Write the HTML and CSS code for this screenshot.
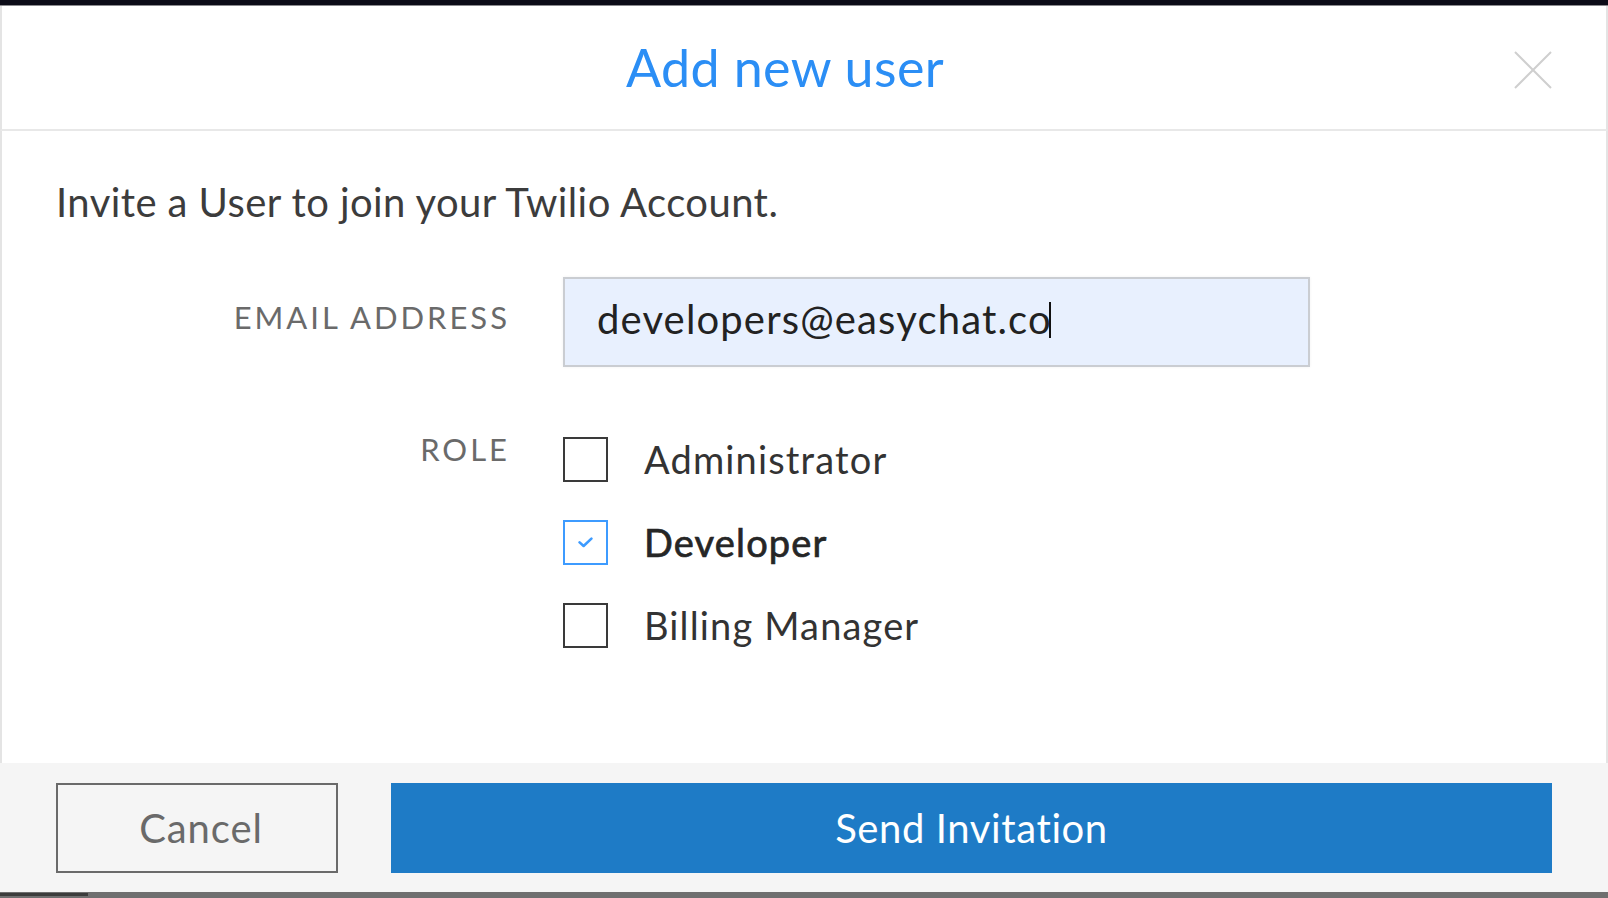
FILE: index.html
```html
<!DOCTYPE html>
<html lang="en">
<head>
<meta charset="utf-8">
<title>Add new user</title>
<link rel="stylesheet" href="styles.css">
</head>
<body>
<div class="page">
  <div class="topbar"></div>
  <header class="modal-header">
    <h1 class="modal-title">Add new user</h1>
    <button class="close-btn" type="button" aria-label="Close">
      <svg width="38" height="38" viewBox="0 0 38 38" aria-hidden="true">
        <path d="M1 1 L37 37 M37 1 L1 37" stroke="#cfcfcf" stroke-width="2" fill="none"/>
      </svg>
    </button>
  </header>
  <main class="modal-body">
    <p class="intro">Invite a User to join your Twilio Account.</p>
    <div class="form">
      <div class="label label-email">EMAIL ADDRESS</div>
      <div class="input" role="textbox">
        <span class="input-text">developers@easychat.co</span><span class="caret"></span>
      </div>
      <div class="label label-role">ROLE</div>
      <div class="options">
        <label class="option">
          <span class="box"></span>
          <span class="option-text">Administrator</span>
        </label>
        <label class="option checked">
          <span class="box">
            <svg width="15" height="11" viewBox="0 0 15 11" aria-hidden="true">
              <path d="M1.6 5.4 L5.6 9 L13.4 1.6" stroke="#3d9bff" stroke-width="2.6" fill="none" stroke-linecap="round" stroke-linejoin="round"/>
            </svg>
          </span>
          <span class="option-text">Developer</span>
        </label>
        <label class="option">
          <span class="box"></span>
          <span class="option-text">Billing Manager</span>
        </label>
      </div>
    </div>
  </main>
  <footer class="modal-footer">
    <button class="btn btn-cancel" type="button">Cancel</button>
    <button class="btn btn-primary" type="button">Send Invitation</button>
  </footer>
  <div class="bottombar"><span class="bottombar-mark"></span></div>
</div>
</body>
</html>
```

FILE: styles.css
```css
* {
  box-sizing: border-box;
}

html, body {
  margin: 0;
  padding: 0;
}

body {
  font-family: "Lato", "Open Sans", sans-serif;
  background: #ffffff;
  color: #3a3a3a;
}

.page {
  height: 100vh;
  display: flex;
  flex-direction: column;
}

.topbar {
  height: 6px;
  background: #0b0b17;
  border-bottom: 1px solid #8a8a8e;
  flex: none;
}

.modal-header {
  height: 125px;
  flex: none;
  display: flex;
  align-items: center;
  padding: 0 54px;
  border-left: 2px solid #e4e4e4;
  border-right: 2px solid #e4e4e4;
  border-bottom: 2px solid #e8e8e8;
}

.modal-title {
  flex: 1;
  margin: 0;
  text-align: center;
  font-size: 52px;
  font-weight: 400;
  line-height: 1.2;
  letter-spacing: 0.4px;
  color: #2b8ef5;
}

.close-btn {
  width: 38px;
  height: 38px;
  padding: 0;
  margin: 4px 0 0 0;
  border: 0;
  background: transparent;
  display: flex;
}

.modal-body {
  flex: 1;
  padding: 47px 54px 0;
  border-left: 2px solid #e4e4e4;
  border-right: 2px solid #e4e4e4;
}

.intro {
  margin: 0 0 51px;
  font-size: 40px;
  line-height: 1.2;
  letter-spacing: 0.42px;
  color: #3c3c3c;
}

.form {
  display: grid;
  grid-template-columns: 451px 747px;
  column-gap: 56px;
  row-gap: 70px;
}

.label {
  text-align: right;
  font-size: 31px;
  line-height: 24px;
  letter-spacing: 3px;
  color: #6a6a6a;
  margin-right: -3px;
}

.label-email {
  padding-top: 28px;
}

.input {
  height: 90px;
  border: 2px solid #cacdd2;
  background: #e8f0fe;
  padding: 0 32px;
  display: flex;
  align-items: center;
  font-size: 40px;
  letter-spacing: 1.15px;
  color: #222222;
  box-shadow: 0 0 3px rgba(0, 0, 0, 0.06);
}

.input-text {
  line-height: 1.2;
  padding-bottom: 6px;
}

.caret {
  display: inline-block;
  width: 2px;
  height: 36px;
  background: #111111;
  margin-left: -3px;
  margin-top: -4px;
}

.options {
  display: flex;
  flex-direction: column;
  gap: 38px;
}

.option {
  display: flex;
  align-items: center;
  gap: 36px;
  height: 45px;
}

.box {
  width: 45px;
  height: 45px;
  border: 2px solid #3a3a3a;
  display: flex;
  align-items: center;
  justify-content: center;
  flex: none;
}

.option.checked .box {
  border-color: #3d9bff;
}

.option-text {
  font-size: 38px;
  line-height: 1.2;
  letter-spacing: 1.15px;
  color: #333333;
}

.option.checked .option-text {
  color: #262626;
  -webkit-text-stroke: 0.7px #262626;
}

.modal-footer {
  height: 129px;
  flex: none;
  background: #f5f5f5;
  display: flex;
  gap: 53px;
  padding: 20px 56px 19px;
}

.btn {
  height: 90px;
  font-family: "Lato", "Open Sans", sans-serif;
  font-size: 40px;
  line-height: 1;
  letter-spacing: 0.6px;
  cursor: pointer;
}

.btn-cancel {
  width: 282px;
  padding: 0 0 0 8px;
  border: 2px solid #6a6a6a;
  background: transparent;
  color: #6a6a6a;
  letter-spacing: 0.9px;
}

.btn-primary {
  flex: 1;
  border: 0;
  background: #1e7bc6;
  color: #ffffff;
}

.bottombar {
  height: 6px;
  flex: none;
  background: #6f6f6f;
  display: flex;
}

.bottombar-mark {
  width: 88px;
  height: 3px;
  margin-top: 1px;
  background: #3c3c3c;
}
```
